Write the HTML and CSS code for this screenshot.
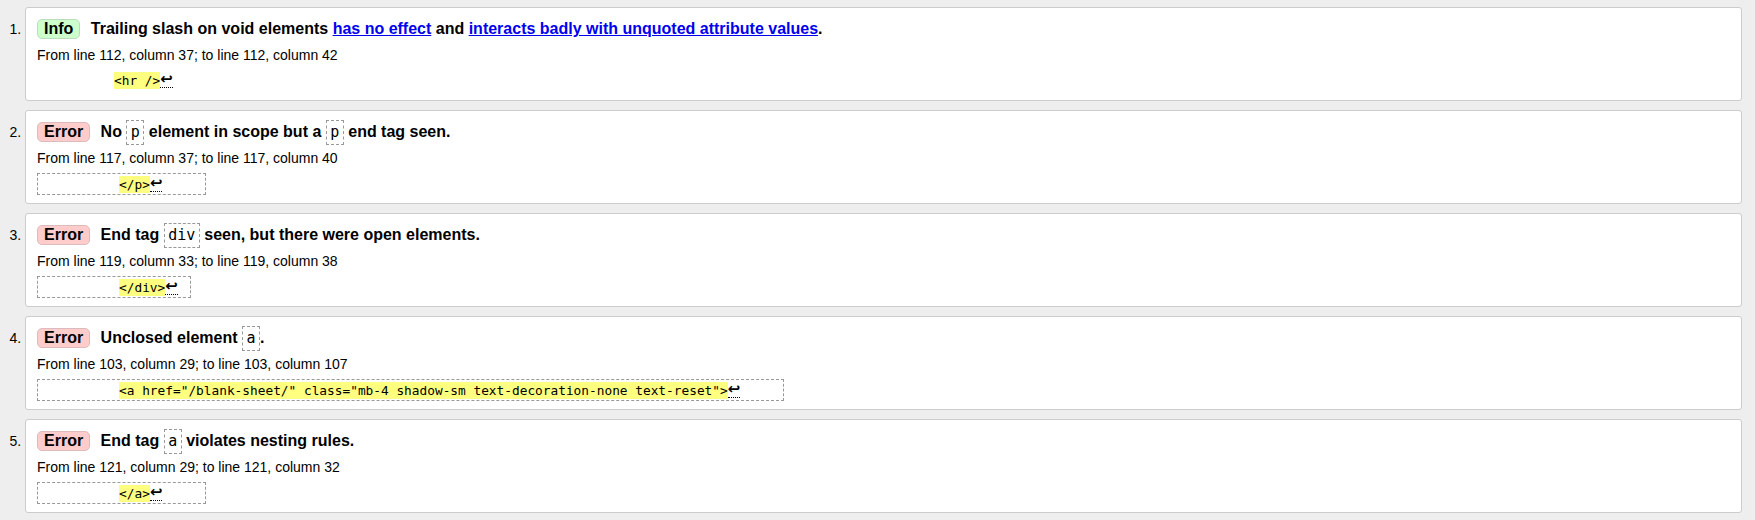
FILE: index.html
```html
<!DOCTYPE html>
<html lang="en">
<head>
<meta charset="utf-8">
<title>Validation messages</title>
<link rel="stylesheet" href="styles.css">
</head>
<body>
<ol class="messages">
  <li class="msg">
    <p class="title"><span class="badge info">Info</span> Trailing slash on void elements <a href="#">has no effect</a> and <a href="#">interacts badly with unquoted attribute values</a>.</p>
    <p class="loc">From line 112, column 37; to line 112, column 42</p>
    <code class="extract plain">          <mark>&lt;hr /&gt;</mark><span class="lf">↩</span></code>
  </li>
  <li class="msg">
    <p class="title"><span class="badge error">Error</span> No <code class="tag">p</code> element in scope but a <code class="tag">p</code> end tag seen.</p>
    <p class="loc">From line 117, column 37; to line 117, column 40</p>
    <code class="extract">          <mark>&lt;/p&gt;</mark><span class="lf">↩</span>     </code>
  </li>
  <li class="msg">
    <p class="title"><span class="badge error">Error</span> End tag <code class="tag">div</code> seen, but there were open elements.</p>
    <p class="loc">From line 119, column 33; to line 119, column 38</p>
    <code class="extract">          <mark>&lt;/div&gt;</mark><span class="lf">↩</span> </code>
  </li>
  <li class="msg">
    <p class="title"><span class="badge error">Error</span> Unclosed element <code class="tag">a</code>.</p>
    <p class="loc">From line 103, column 29; to line 103, column 107</p>
    <code class="extract">          <mark>&lt;a href="/blank-sheet/" class="mb-4 shadow-sm text-decoration-none text-reset"&gt;</mark><span class="lf">↩</span>     </code>
  </li>
  <li class="msg">
    <p class="title"><span class="badge error">Error</span> End tag <code class="tag">a</code> violates nesting rules.</p>
    <p class="loc">From line 121, column 29; to line 121, column 32</p>
    <code class="extract">          <mark>&lt;/a&gt;</mark><span class="lf">↩</span>     </code>
  </li>
</ol>
</body>
</html>
```

FILE: styles.css
```css
html, body {
  margin: 0;
  padding: 0;
}

body {
  background: #eeeeee;
  color: #000;
  font-family: "Liberation Sans", Arial, sans-serif;
  font-size: 14px;
  padding: 7px 13px 6px 0;
}

.messages {
  margin: 0;
  padding: 0 0 0 25px;
  list-style: decimal outside;
}

.msg {
  background: #fff;
  border: 1px solid #cccccc;
  border-radius: 3px;
  padding: 8px 11px 8px;
  margin: 0 0 9px;
}

.msg:last-child {
  margin-bottom: 0;
}

.title {
  margin: 0 0 4px;
  font-size: 16px;
  font-weight: bold;
  line-height: 26px;
}

.title a {
  color: #0000ee;
  text-decoration: underline;
}

.badge {
  display: inline-block;
  line-height: 18px;
  padding: 0 6px;
  border-radius: 5px;
  margin-right: 6px;
}

.badge.info {
  background: #ccffcc;
  border: 1px solid #bbddbb;
}

.badge.error {
  background: #ffcccc;
  border: 1px solid #ddbbbb;
}

.tag {
  display: inline-block;
  font-family: "DejaVu Sans Mono", monospace;
  font-weight: normal;
  font-size: 15px;
  line-height: 17px;
  padding: 3px 3.5px;
  border: 1px dashed #999999;
}

.loc {
  margin: 0 0 6px;
  font-size: 14px;
  line-height: 18px;
}

.extract {
  display: inline-block;
  white-space: pre;
  font-family: "DejaVu Sans Mono", monospace;
  font-size: 12.8px;
  line-height: 17px;
  padding: 2px 4px 1px;
  border: 1px dashed #999999;
  vertical-align: top;
}

.extract.plain {
  border: none;
  padding: 2px 0 3px;
}

.extract mark {
  display: inline-block;
  background: #ffff80;
  color: #000;
  line-height: 17px;
}

.lf {
  display: inline-block;
  font-family: "DejaVu Sans", sans-serif;
  font-size: 15px;
  font-weight: bold;
  line-height: 15px;
  border-bottom: 1px dotted #000;
  vertical-align: top;
}
```
